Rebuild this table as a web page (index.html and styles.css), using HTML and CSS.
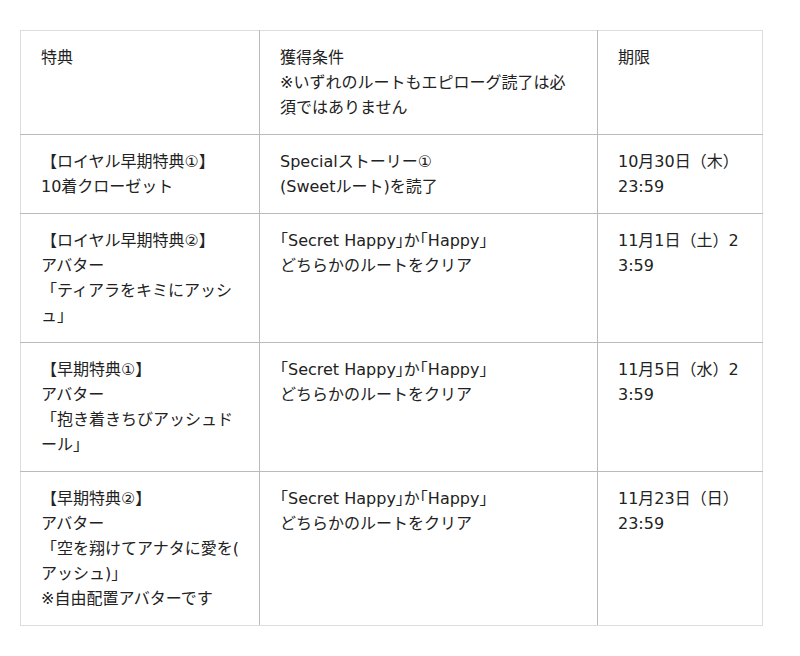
FILE: index.html
```html
<!DOCTYPE html>
<html lang="ja">
<head>
<meta charset="utf-8">
<link rel="stylesheet" href="styles.css">
</head>
<body>
<div class="wrap">
<table class="tbl">
<colgroup><col class="c1"><col class="c2"><col class="c3"></colgroup>
<tr><td>特典</td><td>獲得条件<br>※いずれのルートもエピローグ読了は必須ではありません</td><td>期限</td></tr>
<tr><td>【ロイヤル早期特典①】<br>10着クローゼット</td><td>Specialストーリー①<br>(Sweetルート)を読了</td><td>10月30日（木）23:59</td></tr>
<tr><td>【ロイヤル早期特典②】<br>アバター<br>「ティアラをキミにアッシュ」</td><td>｢Secret Happy｣か｢Happy｣<br>どちらかのルートをクリア</td><td>11月1日（土）23:59</td></tr>
<tr><td>【早期特典①】<br>アバター<br>「抱き着きちびアッシュドール」</td><td>｢Secret Happy｣か｢Happy｣<br>どちらかのルートをクリア</td><td>11月5日（水）23:59</td></tr>
<tr><td>【早期特典②】<br>アバター<br>「空を翔けてアナタに愛を(アッシュ)」<br>※自由配置アバターです</td><td>｢Secret Happy｣か｢Happy｣<br>どちらかのルートをクリア</td><td>11月23日（日）23:59</td></tr>
</table>
</div>
</body>
</html>
```

FILE: styles.css
```css
html, body {
  margin: 0;
  padding: 0;
  background: #fff;
}
.wrap {
  padding: 30px 20px;
}
.tbl {
  border-collapse: collapse;
  table-layout: fixed;
  width: 742px;
  border: 1px solid #ddd;
  font-family: "DejaVu Sans", "Noto Sans CJK JP", sans-serif;
  font-size: 16px;
  line-height: 25px;
  color: #222;
}
.c1 { width: 239px; }
.c2 { width: 338px; }
.c3 { width: 165px; }
.tbl td {
  vertical-align: top;
  padding: 14px 20px;
  border-right: 1px solid #bbb;
  border-bottom: 1px solid #bbb;
  word-break: break-all;
  line-break: anywhere;
}
.tbl tr td:last-child { border-right-color: #ddd; }
.tbl tr:last-child td { border-bottom-color: #ddd; }
.tbl td:first-child { border-left: 1px solid #ddd; }
.tbl tr:first-child td { border-top: 1px solid #ddd; }
```
